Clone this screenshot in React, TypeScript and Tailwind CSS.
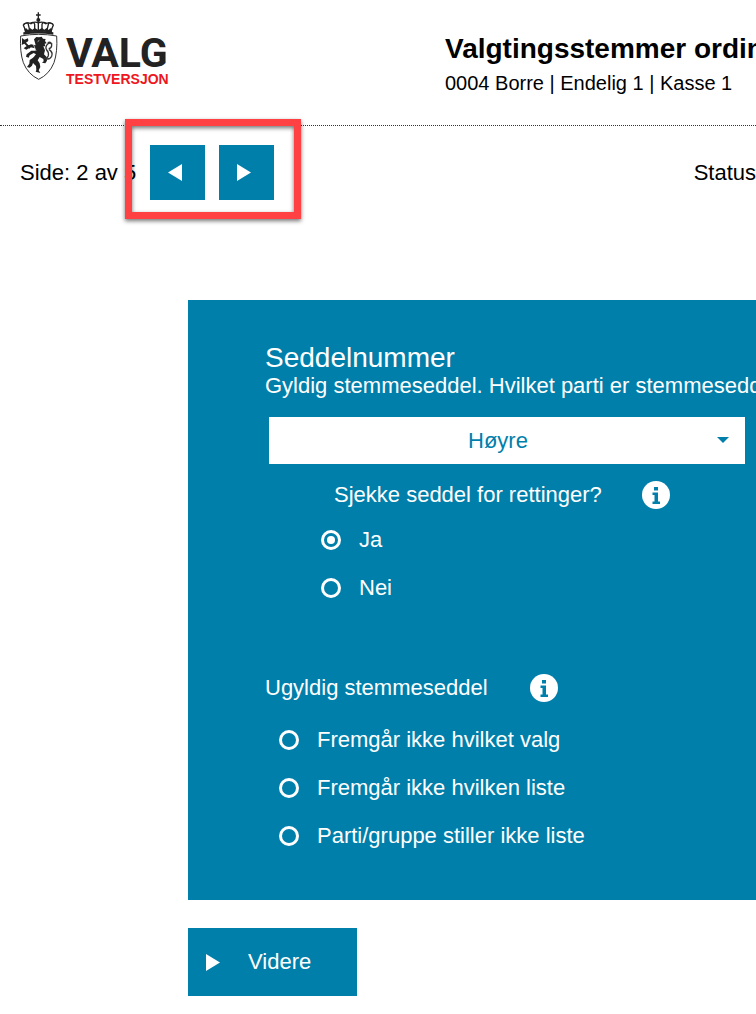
import { useState } from "react";

function CoatOfArms() {
  return (
    <svg viewBox="0 0 150 240" className="h-[80px] w-[50px] shrink-0" aria-hidden="true">
      <g fill="none" stroke="#222" strokeWidth="4">
        <path d="M79 22v22M72 30h14" />
        <circle cx="79" cy="45" r="4" fill="#222" />
        <path d="M79 50v32M42 80L34 60q4-8 14-6l6 26M54 56q12-8 14 2v22M104 56q-12-8-14 2v22M116 80l8-20q-4-8-14-6l-6 26" />
        <path d="M35 58q12-8 22-2q10-8 22-2q12-6 22 2q12-6 22 2" />
      </g>
      <g fill="#222">
        <path d="M37 72l6-2 5 5 6-6 7 5 7-5 11 6 11-6 7 5 7-5 6 6 5-5 6 2-2 11q-40-7-80 0z" />
        <path d="M34 82q45-8 90 0v7q-45-7-90 0z" />
        <path d="M30 99l7 5 11-4 1 8-7 5 14 14-4 4-15-15-8 4 1-9z" />
        <path d="M66 103l7-7 8 1 8-2 4 6 8 1-2 6 5 7-6 1 2 8-6 0 5 12-3 12 8 8 1 11-5 8-10-2 5-4-1-7-11-6-6 10 6 9 2 11-5 10 5 8-14-4 2-5-1-12-9-9-3 8-7 6-8-2 7-10 1-11 10-7 9-10-7-4-12 7-3 7-8-3 2-7 14-11 12 0-1-7-13-3-13 7-8-4 8-6 14-6 14 3z" />
      </g>
      <g fill="none" stroke="#333">
        <path d="M26 93q54-10 108 0q3 48-8 80q-14 35-46 50q-32-15-46-50q-11-32-8-80z" strokeWidth="3" />
        <path d="M96 160q10 2 13-8q2-10-5-17q-6-10 4-19q7-5 13 2M107 113q12-6 12 9q-1 8-9 9M111 133q13 9 8 21q-5 11-18 7" strokeWidth="4" />
        <path d="M64 118l8 20M82 106l-5 4M58 158l9-5" stroke="#fff" strokeWidth="2" />
      </g>
    </svg>
  );
}

function Triangle({ left = false }: { left?: boolean }) {
  return (
    <svg viewBox="0 0 14 17" className="h-[17px] w-[14px] fill-white" aria-hidden="true">
      <path d={left ? "M14 0v17L0 8.5z" : "M0 0v17l14-8.5z"} />
    </svg>
  );
}

function InfoButton({ label }: { label: string }) {
  return (
    <button type="button" aria-label={label}>
      <svg viewBox="0 0 28 28" className="size-7" aria-hidden="true">
        <circle cx="14" cy="14" r="14" fill="#fff" />
        <path d="M12 6h4v3.5h-4zM10.5 11.5H16v9h2V23h-7.500v-2.500h2V14h-2z" fill="#007fab" />
      </svg>
    </button>
  );
}

type RadioProps = { name: string; label: string; checked: boolean; onChange: () => void };

function Radio({ name, label, checked, onChange }: RadioProps) {
  return (
    <label className="flex h-12 items-center gap-[18px]">
      <input
        type="radio"
        name={name}
        checked={checked}
        onChange={onChange}
        className="grid size-5 shrink-0 appearance-none place-content-center rounded-full border-3 border-white before:size-2 before:rounded-full checked:before:bg-white"
      />
      {label}
    </label>
  );
}

const invalidReasons = [
  "Fremgår ikke hvilket valg",
  "Fremgår ikke hvilken liste",
  "Parti/gruppe stiller ikke liste",
];

export default function App() {
  const [page, setPage] = useState(2);
  const [check, setCheck] = useState("Ja");
  const [reason, setReason] = useState("");

  return (
    <div className="min-h-screen overflow-x-hidden bg-white pb-[18px] font-['Liberation_Sans',Arial,sans-serif] text-[22px] leading-7 text-black">
      <header className="grid h-[126px] grid-cols-[433px_1fr] border-b border-dotted border-[#333] pl-3 whitespace-nowrap">
        <div className="flex gap-1 pt-[5px]">
          <CoatOfArms />
          <div className="pt-[30px]">
            <div className="font-['Roboto',sans-serif] text-[41px] leading-[37px] font-bold text-[#222]">VALG</div>
            <div className="text-[14px] leading-[14px] font-bold text-[#ee1620]">TESTVERSJON</div>
          </div>
        </div>
        <div className="pt-[31px]">
          <h1 className="text-[28px] leading-9 font-bold">Valgtingsstemmer ordin</h1>
          <p className="text-[20px] leading-8">0004 Borre | Endelig 1 | Kasse 1</p>
        </div>
      </header>

      <div className="flex items-center justify-between pt-[19px] pl-5 whitespace-nowrap">
        <div className="flex items-center gap-[14px]">
          <span>Side: {page} av 5</span>
          <nav className="relative flex gap-[14px]">
            <button
              type="button"
              aria-label="Forrige"
              onClick={() => setPage(Math.max(1, page - 1))}
              className="flex size-[55px] items-center justify-center bg-[#007fab] pr-[5px]"
            >
              <Triangle left />
            </button>
            <button
              type="button"
              aria-label="Neste"
              onClick={() => setPage(Math.min(5, page + 1))}
              className="flex size-[55px] items-center justify-center bg-[#007fab] pr-[5px]"
            >
              <Triangle />
            </button>
            <div className="pointer-events-none absolute -top-[26px] -right-[27px] -bottom-[19px] -left-[25px] border-7 border-[#ff4143] drop-shadow-[0_2px_2px_rgba(0,0,0,0.55)]" />
          </nav>
        </div>
        <span>Status</span>
      </div>

      <main className="mt-[100px] ml-[188px]">
        <section className="bg-[#007fab] pt-11 pb-10 pl-[77px] text-white">
          <h2 className="text-[28px] leading-7">Seddelnummer</h2>
          <label htmlFor="party" className="block whitespace-nowrap">
            Gyldig stemmeseddel. Hvilket parti er stemmesedd
          </label>
          <div className="relative mt-[17px] mr-[11px] ml-1">
            <select
              id="party"
              className="block h-[47px] w-full appearance-none bg-white pr-[18px] text-center text-[#007fab] [text-align-last:center]"
            >
              <option>Høyre</option>
            </select>
            <svg
              viewBox="0 0 12 6"
              className="pointer-events-none absolute top-[20px] right-4 h-[6px] w-3 fill-[#007fab]"
              aria-hidden="true"
            >
              <path d="M0 0h12L6 6z" />
            </svg>
          </div>

          <fieldset>
            <div className="mt-[15px] flex h-8 items-center gap-10 pl-[69px]">
              <span>Sjekke seddel for rettinger?</span>
              <InfoButton label="Informasjon om rettinger" />
            </div>
            <div className="mt-[5px] pl-14">
              {["Ja", "Nei"].map((v) => (
                <Radio key={v} name="check" label={v} checked={check === v} onChange={() => setCheck(v)} />
              ))}
            </div>
          </fieldset>

          <fieldset>
            <div className="mt-[60px] flex h-8 items-center gap-[42px]">
              <span>Ugyldig stemmeseddel</span>
              <InfoButton label="Informasjon om ugyldig stemmeseddel" />
            </div>
            <div className="mt-3 pl-[14px]">
              {invalidReasons.map((v) => (
                <Radio key={v} name="reason" label={v} checked={reason === v} onChange={() => setReason(v)} />
              ))}
            </div>
          </fieldset>
        </section>

        <button
          type="button"
          className="mt-7 flex h-[68px] w-[169px] items-center gap-7 bg-[#007fab] pl-[18px] text-white"
        >
          <Triangle />
          Videre
        </button>
      </main>
    </div>
  );
}
